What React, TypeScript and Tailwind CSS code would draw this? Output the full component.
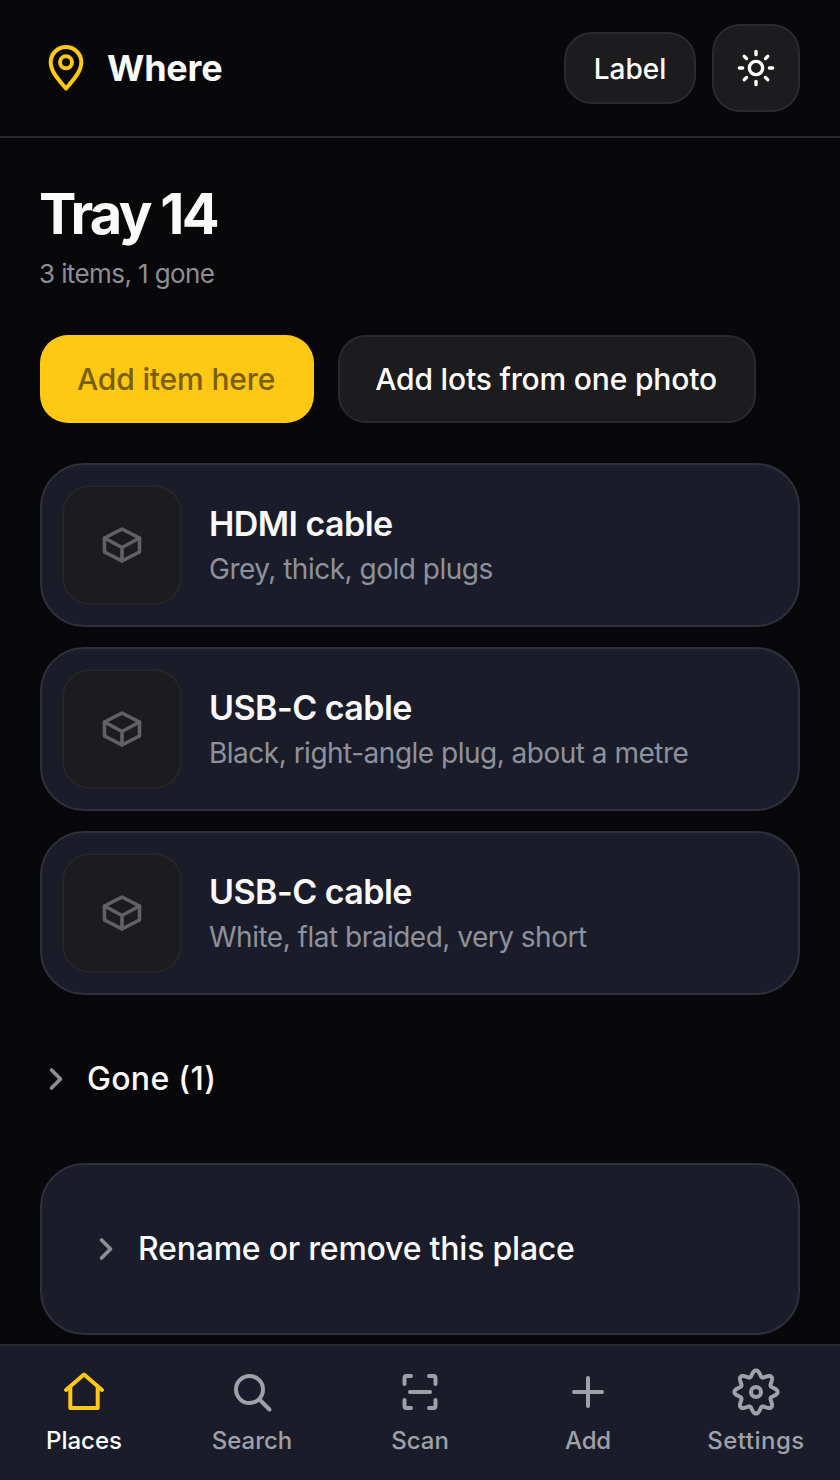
import { ChevronRight, Plus, Sun } from "lucide-react";

const items = [
  { title: "HDMI cable", sub: "Grey, thick, gold plugs" },
  { title: "USB-C cable", sub: "Black, right-angle plug, about a metre" },
  { title: "USB-C cable", sub: "White, flat braided, very short" },
];

function Icon({ children, className, sw = 4 }: { children: React.ReactNode; className: string; sw?: number }) {
  return (
    <svg viewBox="0 0 48 48" fill="none" stroke="currentColor" strokeWidth={sw} strokeLinecap="round" strokeLinejoin="round" className={className}>
      {children}
    </svg>
  );
}

function gearPath() {
  const cx = 24;
  const cy = 24;
  const pts: string[] = [];
  for (let i = 0; i < 240; i++) {
    const t = (i / 240) * Math.PI * 2;
    const r = 18.7 + 2.9 * Math.cos(8 * t);
    pts.push(`${(cx + r * Math.sin(t)).toFixed(2)} ${(cy - r * Math.cos(t)).toFixed(2)}`);
  }
  return `M${pts.join("L")}Z`;
}

function Tab({ icon, label, active, extra }: { icon: React.ReactNode; label: string; active?: boolean; extra?: string }) {
  return (
    <div className="flex flex-col items-center gap-[9px]">
      <div className="flex h-12 items-center justify-center">{icon}</div>
      <span className={`text-[24px] leading-[32px] font-medium ${active ? "text-white" : "text-[#a0a0a8]"} ${extra ?? ""}`}>{label}</span>
    </div>
  );
}

export default function App() {
  return (
    <div className="flex h-[1480px] w-[840px] flex-col overflow-hidden bg-[#08080a] font-['Inter',sans-serif] text-white">
      <header className="flex h-[138px] shrink-0 items-center justify-between border-b-2 border-[#2a2a2d] pr-10 pl-[42px]">
        <div className="flex items-center gap-[17px]">
          <Icon className="size-12 text-[#ffc814]">
            <path d="M24 44.5C17 36 8.7 28 8.7 18.3a15.3 15.3 0 0 1 30.6 0C39.3 28 31 36 24 44.5Z" />
            <circle cx="24" cy="18.3" r="6" />
          </Icon>
          <span className="text-[36px] font-bold tracking-[-0.2px] text-[#fafafa]">Where</span>
        </div>
        <div className="flex items-center gap-4">
          <div className="flex h-[72px] w-[132px] items-center justify-center rounded-[28px] border-2 border-[#2a2a2d] bg-[#1c1c1e] pt-[2px] text-[28px] font-medium">Label</div>
          <div className="flex size-[88px] items-center justify-center rounded-[28px] border-2 border-[#2a2a2d] bg-[#1c1c1e]">
            <Sun className="size-10 text-white" strokeWidth={2} />
          </div>
        </div>
      </header>

      <main className="flex flex-1 flex-col px-10">
        <h1 className="mt-[42px] -ml-[1px] text-[56px] leading-[68px] font-bold tracking-[-2.7px] text-[#fafafa]">Tray 14</h1>
        <p className="mt-[8px] -ml-[1px] text-[26px] leading-[36px] tracking-[-0.6px] text-[#8e8e95]">3 items, 1 gone</p>

        <div className="mt-[43px] flex gap-6">
          <div className="flex h-[88px] w-[274px] items-center justify-center rounded-[28px] bg-[#ffc814] pr-[2px] text-[30px] font-medium tracking-[-0.15px] text-[#7a5f0a]">Add item here</div>
          <div className="flex h-[88px] w-[418px] items-center justify-center rounded-[28px] border-2 border-[#2a2a2d] bg-[#1c1c1e] pr-[2px] text-[30px] font-medium tracking-[-0.17px]">Add lots from one photo</div>
        </div>

        <div className="mt-10 flex flex-col gap-5">
          {items.map((it, i) => (
            <div key={i} className="flex h-[164px] items-center gap-[27px] rounded-[44px] border-2 border-[#2e313c] bg-[#1a1d29] px-5">
              <div className="flex size-[120px] items-center justify-center rounded-[28px] border-2 border-[#262628] bg-[#1c1c1e]">
                <Icon className="size-12 text-[#626266]" sw={3.6}>
                  <path d="M24 8 41.5 17V31L24 40 6.5 31V17Z" />
                  <path d="M6.5 17 24 26.5 41.5 17M24 26.5V40" />
                </Icon>
              </div>
              <div className="flex flex-col gap-[3px] pt-[1px]">
                <span className="text-[34px] leading-[44px] font-semibold tracking-[-0.55px] text-[#fafafa]">{it.title}</span>
                <span className="text-[28px] leading-[40px] tracking-[-0.5px] text-[#8f919b]">{it.sub}</span>
              </div>
            </div>
          ))}
        </div>

        <div className="mt-[62px] -ml-[2px] flex items-center gap-[13px]">
          <ChevronRight className="size-9 text-[#8e8e95]" strokeWidth={2.4} />
          <span className="text-[32px] leading-[44px] font-medium tracking-[0.3px] text-[#fafafa]">Gone (1)</span>
        </div>

        <div className="mt-[62px] flex h-[172px] items-center gap-[14px] rounded-[44px] border-2 border-[#2e313c] bg-[#1a1d29] pl-[46px]">
          <ChevronRight className="size-9 text-[#8e8e95]" strokeWidth={2.4} />
          <span className="text-[32px] leading-[44px] font-medium tracking-[-0.22px] text-[#fafafa]">Rename or remove this place</span>
        </div>
      </main>

      <nav className="grid h-[136px] shrink-0 grid-cols-5 items-start border-t-2 border-[#2a2a2d] bg-[#1a1d29] pt-[22px]">
        <Tab
          active
          label="Places"
          icon={
            <Icon className="size-12 text-[#ffc814]">
              <path d="M6 22 24 6.5 42 22" />
              <path d="M10.3 19V40H37.7V19" />
            </Icon>
          }
        />
        <Tab
          label="Search"
          icon={
            <Icon className="size-12 text-[#a0a0a8]">
              <circle cx="21.5" cy="21.5" r="13.5" />
              <path d="M31.5 31.5 41.5 41.5" />
            </Icon>
          }
        />
        <Tab
          label="Scan"
          icon={
            <Icon className="size-12 text-[#a0a0a8]">
              <path d="M8.5 16V10a2 2 0 0 1 2-2H15" />
              <path d="M39.5 16V10a2 2 0 0 0-2-2H33" />
              <path d="M8.5 32v6a2 2 0 0 0 2 2H15" />
              <path d="M39.5 32v6a2 2 0 0 1-2 2H33" />
              <path d="M14 24H34" />
            </Icon>
          }
        />
        <Tab label="Add" icon={<Plus className="size-12 text-[#a0a0a8]" strokeWidth={2} />} extra="tracking-[-0.2px]" />
        <Tab
          label="Settings"
          extra="tracking-[0.5px]"
          icon={
            <Icon className="size-12 text-[#a0a0a8]">
              <path d={gearPath()} />
              <circle cx="24" cy="24" r="5" />
            </Icon>
          }
        />
      </nav>
    </div>
  );
}
